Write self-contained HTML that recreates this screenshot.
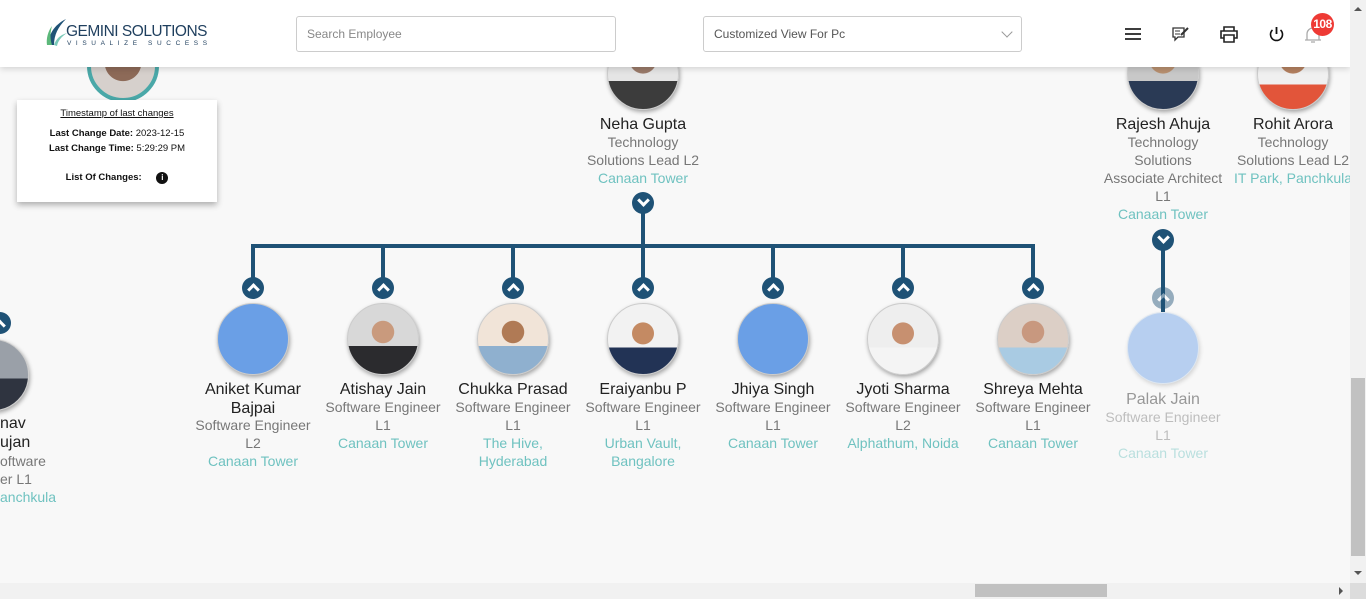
<!DOCTYPE html>
<html><head><meta charset="utf-8"><style>
*{box-sizing:border-box;margin:0;padding:0}
html,body{width:1366px;height:599px;overflow:hidden;background:#f8f8f8;font-family:"Liberation Sans",Arial,sans-serif}
.abs{position:absolute}
.n{position:absolute;width:130px;margin-left:-65px;text-align:center;font-size:14px;line-height:18px;color:#777}
.n b{display:block;font-weight:normal;font-size:16px;color:#222;line-height:18.5px;margin-top:2px;margin-bottom:-2px}
.n i{display:block;font-style:normal;color:#6fc2c0}
.c{position:absolute;width:72px;height:72px;border-radius:50%;box-shadow:1px 2px 4px rgba(0,0,0,.35);border:1px solid #ccc;overflow:hidden}
.blue{background:#6a9fe6}
.btn{position:absolute;width:22px;height:22px;border-radius:50%;background:#1f5276;margin-left:-11px;margin-top:-11px}
.btn:after{content:"";position:absolute;left:7px;width:6px;height:6px;border:solid #fff;border-width:0 3px 3px 0}
.dn:after{top:4px;transform:rotate(45deg)}
.up:after{top:8px;transform:rotate(-135deg)}
.ln{position:absolute;background:#1f5276}
.p1{background:radial-gradient(circle at 50% 40%,#c99a7d 0 20%,transparent 21%),linear-gradient(#d8d8d8 0 60%,#2b2b2e 60%)}
.p2{background:radial-gradient(circle at 50% 40%,#b07a55 0 20%,transparent 21%),linear-gradient(#f1e4d8 0 60%,#8fb0cf 60%)}
.p3{background:radial-gradient(circle at 50% 42%,#c48a63 0 20%,transparent 21%),linear-gradient(#f2f2f2 0 62%,#223355 62%)}
.p4{background:radial-gradient(circle at 50% 42%,#c79070 0 20%,transparent 21%),linear-gradient(#eee 0 62%,#f4f4f4 62%)}
.p5{background:radial-gradient(circle at 50% 40%,#c8987f 0 20%,transparent 21%),linear-gradient(#dccfc6 0 62%,#a9cbe3 62%)}
.p6{background:radial-gradient(circle at 50% 30%,#9a7a6a 0 22%,transparent 23%),linear-gradient(#e5e5e5 0 60%,#3c3c3c 60%)}
.p7{background:radial-gradient(circle at 50% 30%,#b89070 0 22%,transparent 23%),linear-gradient(#c8c8c8 0 60%,#2a3a55 60%)}
.p8{background:radial-gradient(circle at 50% 30%,#b48060 0 22%,transparent 23%),linear-gradient(#f0f0f0 0 65%,#e2553a 65%)}
.p9{background:radial-gradient(circle at 40% 40%,#4a3a30 0 20%,transparent 21%),linear-gradient(#9aa0a8 0 55%,#2f3440 55%)}
</style></head><body>

<div class="abs" style="left:87px;top:30px;width:72px;height:72px;border-radius:50%;border:4px solid #4aa8a8;background:radial-gradient(circle at 50% 45%,#8d6a58 0 38%,#d6d0cc 39%)"></div>

<div class="c p6" style="left:607px;top:38px"></div>
<div class="n" style="left:643px;top:114px"><b>Neha Gupta</b>Technology<br>Solutions Lead L2<i>Canaan Tower</i></div>
<div class="ln" style="left:641px;top:203px;width:4px;height:84px"></div>
<div class="btn dn" style="left:643px;top:203px"></div>

<div class="ln" style="left:251px;top:244px;width:784px;height:4px"></div>
<div class="ln" style="left:251px;top:244px;width:4px;height:44px"></div>
<div class="ln" style="left:381px;top:244px;width:4px;height:44px"></div>
<div class="ln" style="left:511px;top:244px;width:4px;height:44px"></div>
<div class="ln" style="left:771px;top:244px;width:4px;height:44px"></div>
<div class="ln" style="left:901px;top:244px;width:4px;height:44px"></div>
<div class="ln" style="left:1031px;top:244px;width:4px;height:44px"></div>

<div class="btn up" style="left:253px;top:288px"></div>
<div class="btn up" style="left:383px;top:288px"></div>
<div class="btn up" style="left:513px;top:288px"></div>
<div class="btn up" style="left:643px;top:288px"></div>
<div class="btn up" style="left:773px;top:288px"></div>
<div class="btn up" style="left:903px;top:288px"></div>
<div class="btn up" style="left:1033px;top:288px"></div>

<div class="c blue" style="left:217px;top:303px"></div>
<div class="c p1" style="left:347px;top:303px"></div>
<div class="c p2" style="left:477px;top:303px"></div>
<div class="c p3" style="left:607px;top:303px"></div>
<div class="c blue" style="left:737px;top:303px"></div>
<div class="c p4" style="left:867px;top:303px"></div>
<div class="c p5" style="left:997px;top:303px"></div>

<div class="n" style="left:253px;top:379px"><b>Aniket Kumar<br>Bajpai</b>Software Engineer<br>L2<i>Canaan Tower</i></div>
<div class="n" style="left:383px;top:379px"><b>Atishay Jain</b>Software Engineer<br>L1<i>Canaan Tower</i></div>
<div class="n" style="left:513px;top:379px"><b>Chukka Prasad</b>Software Engineer<br>L1<i>The Hive,<br>Hyderabad</i></div>
<div class="n" style="left:643px;top:379px"><b>Eraiyanbu P</b>Software Engineer<br>L1<i>Urban Vault,<br>Bangalore</i></div>
<div class="n" style="left:773px;top:379px"><b>Jhiya Singh</b>Software Engineer<br>L1<i>Canaan Tower</i></div>
<div class="n" style="left:903px;top:379px"><b>Jyoti Sharma</b>Software Engineer<br>L2<i>Alphathum, Noida</i></div>
<div class="n" style="left:1033px;top:379px"><b>Shreya Mehta</b>Software Engineer<br>L1<i>Canaan Tower</i></div>

<div class="c p7" style="left:1127px;top:38px"></div>
<div class="n" style="left:1163px;top:114px"><b>Rajesh Ahuja</b>Technology<br>Solutions<br>Associate Architect<br>L1<i>Canaan Tower</i></div>
<div class="ln" style="left:1161px;top:240px;width:4px;height:72px"></div>
<div class="btn dn" style="left:1163px;top:240px"></div>
<div class="btn up" style="left:1163px;top:298px;opacity:.45"></div>
<div class="c" style="left:1127px;top:312px;background:#b7cff0;border-color:#dde6f0;box-shadow:1px 2px 4px rgba(0,0,0,.15)"></div>
<div class="n" style="left:1163px;top:389px;opacity:.45"><b>Palak Jain</b>Software Engineer<br>L1<i>Canaan Tower</i></div>

<div class="c p8" style="left:1257px;top:38px"></div>
<div class="n" style="left:1293px;top:114px;width:140px;margin-left:-70px"><b>Rohit Arora</b>Technology<br>Solutions Lead L2<i>IT Park, Panchkula</i></div>

<div class="c p9" style="left:-43px;top:339px"></div>
<div class="btn dn" style="left:0;top:323px;transform:rotate(180deg)"></div>
<div class="abs" style="left:0;top:415px;font-size:16px;line-height:18.5px;color:#222">nav<br>ujan</div>
<div class="abs" style="left:0;top:452px;font-size:14px;line-height:18px;color:#777">oftware<br>er L1<br><span style="color:#6fc2c0">anchkula</span></div>

<div class="abs" style="left:0;top:0;width:1350px;height:67px;background:#fff;box-shadow:0 2px 6px rgba(0,0,0,.15)">
  <svg class="abs" style="left:46px;top:17px" width="22" height="30" viewBox="0 0 22 30">
    <path d="M3 28 C2 18 8 8 20 2 C12 10 8 18 8 28Z" fill="#1f5276"/>
    <path d="M1 28 C0 22 2 14 6 9 C4 16 4 22 6 28Z" fill="#5cb87a"/>
    <path d="M8 28 C10 22 14 18 21 16 C15 20 12 24 11 29Z" fill="#7ac9b8"/>
  </svg>
  <div class="abs" style="left:66px;top:23px;font-size:15.5px;color:#1f3f5e;letter-spacing:-.5px;line-height:18px">GEMINI SOLUTIONS</div>
  <div class="abs" style="left:67px;top:40px;font-size:6.5px;letter-spacing:4.6px;color:#1f3f5e">VISUALIZE SUCCESS</div>
  <div class="abs" style="left:296px;top:16px;width:320px;height:36px;border:1px solid #ccc;border-radius:3px;font-size:12px;color:#888;padding:10px 10px">Search Employee</div>
  <div class="abs" style="left:703px;top:16px;width:319px;height:36px;border:1px solid #ccc;border-radius:3px;font-size:12px;color:#555;padding:10px 10px">Customized View For Pc
    <div class="abs" style="right:10px;top:11px;width:8px;height:8px;border:solid #999;border-width:0 1px 1px 0;transform:rotate(45deg)"></div></div>
  <svg class="abs" style="left:1124px;top:27px" width="18" height="14"><path d="M1 2H17M1 7H17M1 12H17" stroke="#222" stroke-width="1.8"/></svg>
  <svg class="abs" style="left:1172px;top:26px" width="18" height="16"><path d="M1 2H12V11H6L3 14V11H1Z" fill="none" stroke="#333" stroke-width="1.3"/><path d="M3 5H8M3 8H8" stroke="#333"/><path d="M9 9L16 2" stroke="#333" stroke-width="2"/></svg>
  <svg class="abs" style="left:1220px;top:26px" width="18" height="17"><path d="M4 5V1H14V5M4 12H1V5H17V12H14M4 9H14V16H4Z" fill="none" stroke="#222" stroke-width="1.6"/></svg>
  <svg class="abs" style="left:1268px;top:26px" width="17" height="17"><path d="M8.5 1V8" stroke="#111" stroke-width="1.8"/><path d="M4.5 4A6 6 0 1 0 12.5 4" fill="none" stroke="#111" stroke-width="1.6"/></svg>
  <svg class="abs" style="left:1304px;top:26px" width="18" height="18"><path d="M3 14V8A6 6 0 0 1 15 8V14ZM1 14H17M7 16H11" fill="none" stroke="#aaa" stroke-width="1.3"/></svg>
  <div class="abs" style="left:1311px;top:13px;width:23px;height:23px;border-radius:50%;background:#ee3a35;color:#fff;font-size:12px;font-weight:bold;text-align:center;line-height:23px;letter-spacing:-.5px">108</div>
</div>

<div class="abs" style="left:17px;top:100px;width:200px;height:102px;background:#fff;box-shadow:0 3px 6px rgba(0,0,0,.3);font-size:9.5px;color:#111;text-align:center;line-height:11px">
  <div style="margin-top:8px;text-decoration:underline">Timestamp of last changes</div>
  <div style="margin-top:9px"><b>Last Change Date:</b> 2023-12-15</div>
  <div style="margin-top:4px"><b>Last Change Time:</b> 5:29:29 PM</div>
  <div style="margin-top:18px"><b>List Of Changes:</b> <span style="display:inline-block;width:12px;height:12px;border-radius:50%;background:#111;color:#fff;font-size:8px;line-height:12px;font-weight:bold;margin-left:12px">i</span></div>
</div>

<div class="abs" style="left:1350px;top:0;width:16px;height:583px;background:#f1f1f1"></div>
<div class="abs" style="left:1351px;top:378px;width:14px;height:178px;background:#c1c1c1"></div>
<div class="abs" style="left:1354px;top:7px;border:4px solid transparent;border-bottom:4px solid #555;border-top:0"></div>
<div class="abs" style="left:1354px;top:571px;border:4px solid transparent;border-top:4px solid #555;border-bottom:0"></div>
<div class="abs" style="left:0;top:583px;width:1350px;height:16px;background:#f1f1f1"></div>
<div class="abs" style="left:975px;top:584px;width:132px;height:13px;background:#c1c1c1"></div>
<div class="abs" style="left:1339px;top:587px;border:4px solid transparent;border-left:4px solid #555;border-right:0"></div>
<div class="abs" style="left:1350px;top:583px;width:16px;height:16px;background:#dcdcdc"></div>
</body></html>
